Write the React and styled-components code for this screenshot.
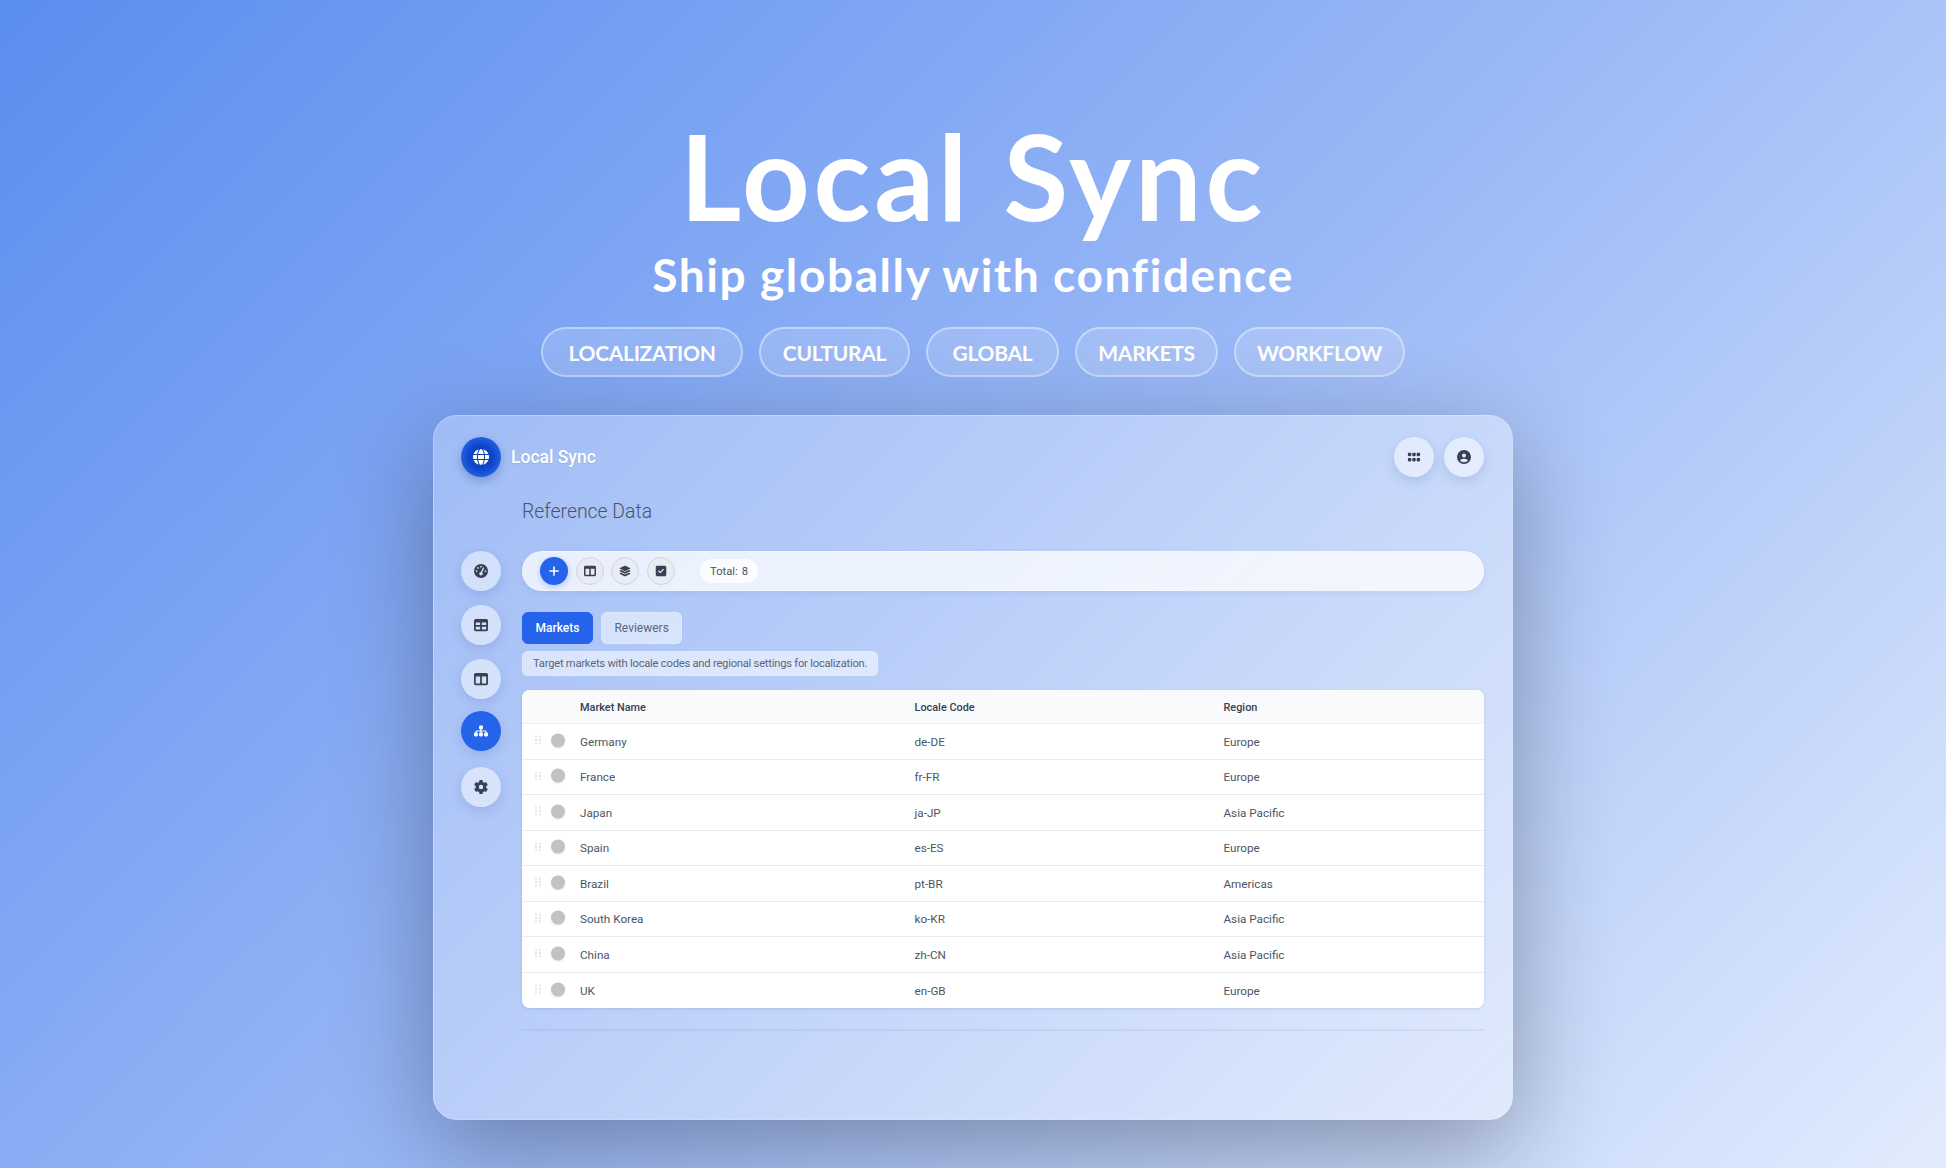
import React from 'react';
import styled, { createGlobalStyle } from 'styled-components';
import { FaCircleUser, FaGaugeHigh, FaGear, FaGlobe, FaGrip, FaLayerGroup, FaPlus, FaSitemap, FaSquareCheck, FaTable, FaTableColumns } from 'react-icons/fa6';

const Global = createGlobalStyle`
  html, body { margin: 0; padding: 0; height: 1168px; overflow: hidden; }
  body { font-family: Roboto, "Noto Sans", "Liberation Sans", sans-serif; }
  * { box-sizing: border-box; }
  svg { height: 1em; width: auto; }
`;

const Page = styled.div`
  width: 100%;
  height: 1168px;
  overflow: hidden;
  background: linear-gradient(135deg, #5b8df0 0%, #98b7f6 50%, #e2ecfd 100%);
  display: flex;
  flex-direction: column;
  align-items: center;
`;
const Hero = styled.header`
  display: flex;
  flex-direction: column;
  align-items: center;
  padding-top: 105px;
  font-family: Lato, "Noto Sans", sans-serif;
  color: #fff;
`;
const Title = styled.h1`
  margin: 0;
  font-size: 118px;
  line-height: 142px;
  font-weight: 700;
  letter-spacing: 3.8px;
`;
const Subtitle = styled.h2`
  margin: 0;
  padding-top: 1px;
  font-size: 46px;
  line-height: 53px;
  font-weight: 700;
  letter-spacing: 1.6px;
`;
const Pills = styled.div`
  display: flex;
  gap: 16px;
  margin-top: 26px;
`;
const Pill = styled.span`
  width: ${p => p.$width}px;
  height: 50px;
  display: flex;
  align-items: center;
  justify-content: center;
  border-radius: 25px;
  border: 2px solid rgba(255,255,255,.4);
  background: rgba(255,255,255,.15);
  font-size: 21px;
  font-weight: 700;
  letter-spacing: -0.3px;
`;
const Card = styled.main`
  width: 1080px;
  height: 705px;
  margin-top: 38px;
  padding: 21px 28px 0 27px;
  border-radius: 24px;
  border: 1px solid rgba(255,255,255,.2);
  background: linear-gradient(135deg, rgba(255,255,255,.27), rgba(255,255,255,.41));
  box-shadow: 0 30px 100px rgba(0,0,10,.32);
  color: #374151;
`;
const TopBar = styled.div`
  display: flex;
  justify-content: space-between;
  align-items: center;
  height: 40px;
`;
const Brand = styled.div`
  display: flex;
  align-items: center;
  gap: 10px;
  color: #fff;
  font-size: 17.5px;
  font-weight: 500;
  text-shadow: 0 1px 2px rgba(0,0,0,.1);
`;
const Logo = styled.span`
  width: 40px;
  height: 40px;
  border-radius: 50%;
  display: flex;
  align-items: center;
  justify-content: center;
  background: radial-gradient(circle, #0a37ad 0%, #0f48cc 45%, #2f6dea 85%);
  box-shadow: 0 4px 10px rgba(30,60,130,.3);
  color: #fff;
  font-size: 16px;
`;
const TopActions = styled.div`
  display: flex;
  gap: 10px;
`;
const RoundButton = styled.button`
  width: 40px;
  height: 40px;
  padding: 0;
  border: 0;
  border-radius: 50%;
  display: flex;
  align-items: center;
  justify-content: center;
  font-size: 14px;
  color: ${p => (p.$active ? '#fff' : '#374151')};
  background: ${p => (p.$active ? '#2563eb' : 'rgba(255,255,255,.5)')};
  box-shadow: 0 4px 12px rgba(40,70,140,.16);
  transform: ${p => (p.$active ? 'translateY(-2px)' : 'none')};
`;
const Layout = styled.div`
  display: grid;
  grid-template-columns: 40px 1fr;
  column-gap: 21px;
`;
const PageTitle = styled.h3`
  grid-column: 2;
  margin: 20px 0 24px;
  height: 30px;
  line-height: 30px;
  font-size: 19.4px;
  font-weight: 300;
  color: #475569;
`;
const Sidebar = styled.nav`
  grid-column: 1;
  display: flex;
  flex-direction: column;
  gap: 14px;
`;
const Content = styled.section`
  grid-column: 2;
  display: flex;
  flex-direction: column;
  align-items: flex-start;
`;
const Toolbar = styled.div`
  width: 100%;
  height: 40px;
  padding: 0 17px;
  display: flex;
  align-items: center;
  gap: 7.5px;
  border-radius: 20px;
  background: rgba(255,255,255,.75);
  border: 1px solid rgba(255,255,255,.3);
  box-shadow: 0 2px 6px rgba(40,70,140,.08);
`;
const ToolButton = styled.button`
  width: 28px;
  height: 28px;
  padding: 0;
  border-radius: 50%;
  display: flex;
  align-items: center;
  justify-content: center;
  font-size: 12px;
  color: ${p => (p.$primary ? '#fff' : '#374151')};
  background: ${p => (p.$primary ? '#2563eb' : 'rgba(229,231,235,.55)')};
  border: ${p => (p.$primary ? '0' : '1px solid #d1d5db')};
  box-shadow: ${p => (p.$primary ? '0 2px 6px rgba(37,99,235,.3)' : 'none')};
`;
const Total = styled.div`
  margin-left: 18px;
  height: 24px;
  padding: 0 10px;
  display: flex;
  align-items: center;
  gap: 4px;
  border-radius: 12px;
  background: rgba(255,255,255,.8);
  font-size: 11.2px;
  font-weight: 400;
  color: #4b5563;
`;
const Tabs = styled.div`
  display: flex;
  gap: 8px;
  margin-top: 21px;
`;
const Tab = styled.button`
  height: 32px;
  padding: 0 12.5px;
  border: 1px solid ${p => (p.$active ? '#2563eb' : 'rgba(255,255,255,.2)')};
  border-radius: 6px;
  font-family: inherit;
  font-size: 12px;
  font-weight: ${p => (p.$active ? 500 : 400)};
  color: ${p => (p.$active ? '#fff' : '#5b6678')};
  background: ${p => (p.$active ? '#2563eb' : 'rgba(255,255,255,.5)')};
`;
const Description = styled.p`
  margin: 7px 0 14px;
  height: 25px;
  padding: 0 10px;
  display: flex;
  align-items: center;
  border-radius: 6px;
  border: 1px solid rgba(255,255,255,.2);
  background: rgba(255,255,255,.55);
  font-size: 11.2px;
  letter-spacing: -0.23px;
  color: #5b6678;
`;
const Table = styled.table`
  width: 100%;
  table-layout: fixed;
  border-collapse: separate;
  border-spacing: 0;
  border-radius: 8px;
  overflow: hidden;
  background: #fff;
  box-shadow: 0 1px 3px rgba(40,70,140,.14);
`;
const Th = styled.th`
  height: 34px;
  padding: 1px 0 0;
  text-align: left;
  font-size: 10.9px;
  font-weight: 500;
  color: #374151;
  background: #f9fafb;
  border-bottom: 1px solid #eef0f3;
`;
const Td = styled.td`
  height: 35.5px;
  padding: 1px 0 0;
  font-size: 11.7px;
  color: #4b5563;
  background: #fff;
  border-bottom: ${p => (p.$last ? '0' : '1px solid #e9ebef')};
`;
const RowTools = styled.div`
  display: flex;
  align-items: center;
  gap: 10px;
  padding-left: 13px;
  transform: translateY(-1.5px);
`;
const Circle = styled.span`
  width: 14px;
  height: 14px;
  border-radius: 50%;
  background: #c2c2c2;
  box-shadow: 0 1px 2px rgba(0,0,0,.1);
`;
const Divider = styled.hr`
  width: 100%;
  margin: 21px 0 0;
  height: 2px;
  border: 0;
  background: rgba(90,120,190,.1);
`;

const DragDots = () => (
  <svg width="6" height="9" viewBox="0 0 6 9" style={{ height: 9, width: 6 }} aria-hidden="true">
    {[0, 3.5, 7].map(y => [0, 4].map(x => <rect key={`${x}-${y}`} x={x} y={y} width="2" height="2" fill="#e2e5ea" />))}
  </svg>
);

const markets = [
  ['Germany', 'de-DE', 'Europe'],
  ['France', 'fr-FR', 'Europe'],
  ['Japan', 'ja-JP', 'Asia Pacific'],
  ['Spain', 'es-ES', 'Europe'],
  ['Brazil', 'pt-BR', 'Americas'],
  ['South Korea', 'ko-KR', 'Asia Pacific'],
  ['China', 'zh-CN', 'Asia Pacific'],
  ['UK', 'en-GB', 'Europe'],
];
const tags = [['LOCALIZATION', 202], ['CULTURAL', 151], ['GLOBAL', 133], ['MARKETS', 143], ['WORKFLOW', 171]];

export default function App() {
  return (
    <Page>
      <Global />
      <Hero>
        <Title>Local Sync</Title>
        <Subtitle>Ship globally with confidence</Subtitle>
        <Pills>
          {tags.map(([t, w]) => <Pill key={t} $width={w}>{t}</Pill>)}
        </Pills>
      </Hero>
      <Card>
        <TopBar>
          <Brand><Logo><FaGlobe /></Logo>Local Sync</Brand>
          <TopActions>
            <RoundButton><FaGrip /></RoundButton>
            <RoundButton><FaCircleUser /></RoundButton>
          </TopActions>
        </TopBar>
        <Layout>
          <PageTitle>Reference Data</PageTitle>
          <Sidebar>
            <RoundButton><FaGaugeHigh /></RoundButton>
            <RoundButton><FaTable /></RoundButton>
            <RoundButton><FaTableColumns /></RoundButton>
            <RoundButton $active><FaSitemap /></RoundButton>
            <RoundButton><FaGear /></RoundButton>
          </Sidebar>
          <Content>
            <Toolbar>
              <ToolButton $primary><FaPlus /></ToolButton>
              <ToolButton><FaTableColumns /></ToolButton>
              <ToolButton><FaLayerGroup /></ToolButton>
              <ToolButton><FaSquareCheck /></ToolButton>
              <Total><span>Total:</span><span>8</span></Total>
            </Toolbar>
            <Tabs>
              <Tab $active>Markets</Tab>
              <Tab>Reviewers</Tab>
            </Tabs>
            <Description>Target markets with locale codes and regional settings for localization.</Description>
            <Table>
              <colgroup>
                <col style={{ width: 58 }} />
                <col style={{ width: 334.5 }} />
                <col style={{ width: 309 }} />
                <col />
              </colgroup>
              <thead>
                <tr><Th /><Th>Market Name</Th><Th>Locale Code</Th><Th>Region</Th></tr>
              </thead>
              <tbody>
                {markets.map((m, i) => {
                  const last = i === markets.length - 1;
                  return (
                    <tr key={m[0]}>
                      <Td $last={last}><RowTools><DragDots /><Circle /></RowTools></Td>
                      <Td $last={last}>{m[0]}</Td>
                      <Td $last={last}>{m[1]}</Td>
                      <Td $last={last}>{m[2]}</Td>
                    </tr>
                  );
                })}
              </tbody>
            </Table>
            <Divider />
          </Content>
        </Layout>
      </Card>
    </Page>
  );
}
